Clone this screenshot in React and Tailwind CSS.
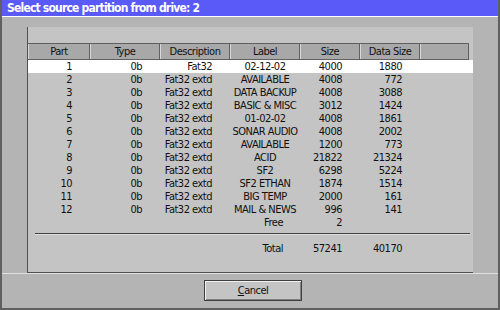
import React from "react";

const rows = [
  ["1", "0b", "Fat32", "02-12-02", "4000", "1880"],
  ["2", "0b", "Fat32 extd", "AVAILABLE", "4008", "772"],
  ["3", "0b", "Fat32 extd", "DATA BACKUP", "4008", "3088"],
  ["4", "0b", "Fat32 extd", "BASIC & MISC", "3012", "1424"],
  ["5", "0b", "Fat32 extd", "01-02-02", "4008", "1861"],
  ["6", "0b", "Fat32 extd", "SONAR AUDIO", "4008", "2002"],
  ["7", "0b", "Fat32 extd", "AVAILABLE", "1200", "773"],
  ["8", "0b", "Fat32 extd", "ACID", "21822", "21324"],
  ["9", "0b", "Fat32 extd", "SF2", "6298", "5224"],
  ["10", "0b", "Fat32 extd", "SF2 ETHAN", "1874", "1514"],
  ["11", "0b", "Fat32 extd", "BIG TEMP", "2000", "161"],
  ["12", "0b", "Fat32 extd", "MAIL & NEWS", "996", "141"],
];

const font = { fontFamily: '"DejaVu Sans Condensed", "DejaVu Sans", sans-serif' };

const cell = "whitespace-nowrap text-[11px] tracking-[-0.5px] leading-none text-[#101010]";

function Row({ r, sel }) {
  return (
    <div className={`flex h-[13px] items-center ${cell} ${sel ? "bg-white" : ""}`}>
      <div className="w-[62px] pr-[18px] text-right">{r[0]}</div>
      <div className="w-[70px] pr-[18px] text-right">{r[1]}</div>
      <div className="w-[70px] pr-[18px] text-right">{r[2]}</div>
      <div className="w-[70px] text-center">{r[3]}</div>
      <div className="w-[60px] pr-[18px] text-right">{r[4]}</div>
      <div className="w-[60px] pr-[18px] text-right">{r[5]}</div>
      <div className="flex-1" />
    </div>
  );
}

function H({ w, children }) {
  return (
    <div className={`${w} flex h-full items-center justify-center border-l border-l-[#d8d8d8] border-r border-r-[#606060]`}>
      {children}
    </div>
  );
}

export default function App() {
  return (
    <div className="flex h-[310px] w-[500px] flex-col overflow-hidden border-x-2 border-b-2 border-x-[#606060] border-b-[#606060] bg-[#b4b4b4]" style={font}>
      <div className="flex h-[16px] items-center whitespace-nowrap bg-[#5a5af8] pl-[5px] text-[12px] font-bold tracking-[-0.8px] leading-none text-white">
        Select source partition from drive: 2
      </div>
      <div className="h-[1px] bg-white" />
      <div className="flex flex-1 flex-col px-[25px] pt-[10px]">
        <div className="flex h-[246px] flex-col border-l border-b border-l-[#505050] border-b-[#505050] bg-[#c4c4c4] pt-[16px]">
          <div className={`mr-[4px] flex h-[17px] border-y border-y-[#606060] bg-[#a8a8a8] ${cell}`}>
            <H w="w-[62px]">Part</H>
            <H w="w-[70px]">Type</H>
            <H w="w-[70px]">Description</H>
            <H w="w-[70px]">Label</H>
            <H w="w-[60px]">Size</H>
            <H w="w-[60px]">Data Size</H>
            <H w="flex-1"></H>
          </div>
          {rows.map((r, i) => (
            <Row key={i} r={r} sel={i === 0} />
          ))}
          <div className={`flex h-[13px] items-center ${cell}`}>
            <div className="w-[202px]" />
            <div className="w-[70px] pr-[17px] text-right">Free</div>
            <div className="w-[60px] pr-[18px] text-right">2</div>
          </div>
          <div className="ml-[7px] mr-[3px] mt-[4px] h-[2px] border-t border-t-[#404040] border-b border-b-[#e0e0e0]" />
          <div className={`mt-[7px] flex h-[13px] items-center ${cell}`}>
            <div className="w-[202px]" />
            <div className="w-[70px] pr-[17px] text-right">Total</div>
            <div className="w-[60px] pr-[18px] text-right">57241</div>
            <div className="w-[60px] pr-[18px] text-right">40170</div>
          </div>
        </div>
      </div>
      <div className="flex h-[36px] items-center justify-center border-t border-t-[#e0e0e0]">
        <button className={`ml-[6px] flex h-[21px] w-[98px] items-center justify-center border border-[#404040] bg-[#c4c4c4] shadow-[inset_1px_1px_0_#f0f0f0,inset_-1px_-1px_0_#808080] ${cell}`}>
          <span><span className="underline">C</span>ancel</span>
        </button>
      </div>
    </div>
  );
}
